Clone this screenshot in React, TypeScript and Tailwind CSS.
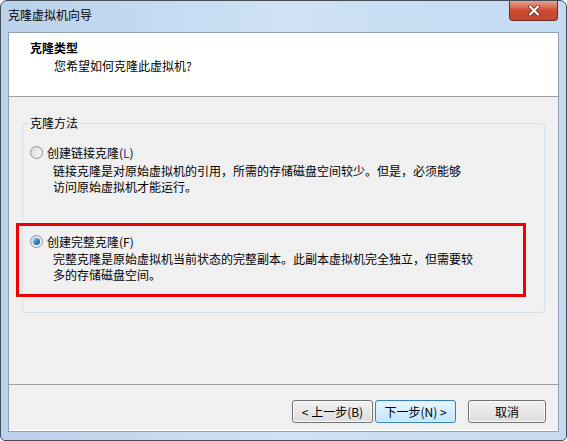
const font = { fontFamily: '"Noto Sans CJK SC", "Liberation Sans", sans-serif' };

function Radio({ checked }: { checked?: boolean }) {
  return (
    <div className="w-[13px] h-[13px] rounded-full border border-[#8e8f8f] bg-gradient-to-br from-[#d6d6d6] to-[#fafafa] flex items-center justify-center shrink-0">
      {checked ? (
        <div className="w-[7px] h-[7px] rounded-full bg-gradient-to-br from-[#9fd4f7] via-[#2a8bd3] to-[#0f4f9a]" />
      ) : (
        <div className="w-[7px] h-[7px] rounded-full bg-gradient-to-br from-[#e2e2e2] to-[#f4f4f4]" />
      )}
    </div>
  );
}

function Btn({ children, focused, width }: { children: React.ReactNode; focused?: boolean; width: string }) {
  return (
    <button
      className={`h-[23px] rounded-[3px] border text-[12px] text-black flex items-center justify-center bg-gradient-to-b ${width} ${
        focused
          ? "border-[#3c7fb1] from-[#eaf6fd] to-[#bee6fd] shadow-[inset_0_0_0_1px_#d8f0fc]"
          : "border-[#707070] from-[#f2f2f2] to-[#dddddd] shadow-[inset_0_0_0_1px_#fcfcfc]"
      }`}
      style={font}
    >
      {children}
    </button>
  );
}

export default function App() {
  return (
    <div className="w-[567px] h-[441px] bg-white" style={font}>
      <div className="w-[567px] h-[441px] rounded-t-[7px] rounded-b-[5px] border border-[#454d57] bg-gradient-to-r from-[#b9d1ea] via-[#cfe2f6] to-[#c4daf1] flex flex-col">
        {/* Title bar */}
        <div className="h-[31px] flex items-start justify-between">
          <div className="pl-[7px] pt-[5px] text-[12px] text-black">克隆虚拟机向导</div>
          <div className="mr-[8px] w-[49px] h-[20px] rounded-b-[4px] border border-t-0 border-[#6a2f26] bg-gradient-to-b from-[#e4a493] via-[#cf4a30] to-[#c0472f] flex items-center justify-center">
            <svg width="12" height="11" viewBox="0 0 12 11">
              <path d="M2 1.5 L10 9.5 M10 1.5 L2 9.5" stroke="#5b2219" strokeWidth="3.6" strokeLinecap="round" />
              <path d="M2 1.5 L10 9.5 M10 1.5 L2 9.5" stroke="#ffffff" strokeWidth="2.2" strokeLinecap="round" />
            </svg>
          </div>
        </div>

        {/* Client area */}
        <div className="mx-[7px] h-[400px] border border-[#8fa1b6] bg-[#f0f0f0] flex flex-col">
          <div className="h-[64px] bg-white border-b border-[#a0a0a0] pl-[21px] pt-[6px]">
            <div className="text-[12px] font-bold leading-[18px] text-black">克隆类型</div>
            <div className="text-[12px] leading-[18px] text-black pl-[24px]">您希望如何克隆此虚拟机?</div>
          </div>

          <div className="flex-1 flex flex-col">
            <fieldset className="mx-[13px] mt-[18px] h-[198px] border border-[#d5dfe5] rounded-[3px] px-[6px]">
              <legend className="px-[1px] text-[12px] leading-[16px] text-black">克隆方法</legend>
              <div className="flex items-center gap-[4px] mt-[13px] pl-[1px]">
                <Radio />
                <span className="text-[12px] leading-[17px] text-black">
                  创建链接克隆(<span className="text-[#1a3fa8]">L</span>)
                </span>
              </div>
              <div className="mt-[2px] pl-[24px] text-[12px] leading-[16px] text-black">
                链接克隆是对原始虚拟机的引用，所需的存储磁盘空间较少。但是，必须能够
                <br />
                访问原始虚拟机才能运行。
              </div>

              <div className="relative mt-[38px]">
                <div className="absolute -left-[13px] -top-[10px] right-[12px] -bottom-[14px] border-[3px] border-[#f00000]" />
                <div className="flex items-center gap-[4px] pl-[1px]">
                  <Radio checked />
                  <span className="text-[12px] leading-[17px] text-black">创建完整克隆(F)</span>
                </div>
                <div className="mt-[1px] pl-[24px] text-[12px] leading-[16px] text-black">
                  完整克隆是原始虚拟机当前状态的完整副本。此副本虚拟机完全独立，但需要较
                  <br />
                  多的存储磁盘空间。
                </div>
              </div>
            </fieldset>

            <div className="mt-auto border-t border-[#a0a0a0] border-b-white border-b h-[47px] flex items-start justify-end pt-[15px] pr-[12px]">
              <Btn width="w-[81px]">&lt; 上一步(B)</Btn>
              <div className="w-[2px]" />
              <Btn focused width="w-[81px]">下一步(N) &gt;</Btn>
              <div className="w-[12px]" />
              <Btn width="w-[78px]">取消</Btn>
            </div>
          </div>
        </div>
      </div>
    </div>
  );
}
